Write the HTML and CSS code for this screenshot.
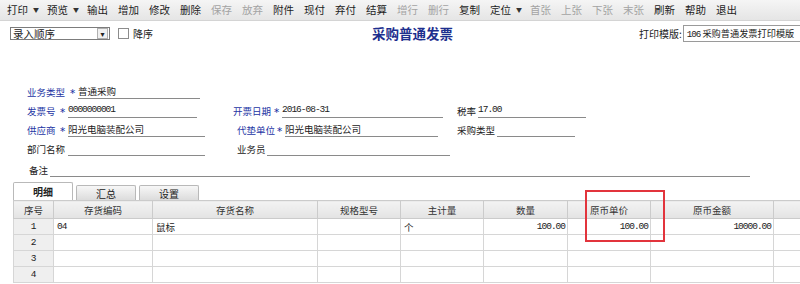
FILE: index.html
```html
<!DOCTYPE html>
<html lang="zh-CN">
<head>
    <meta charset="UTF-8">
    <title>采购普通发票</title>
    <link rel="stylesheet" href="styles.css">
</head>
<body>
<div class="page">
    <!-- toolbar -->
    <div class="toolbar">
        <span class="tb">打印</span><span class="tb arrow">▼</span>
        <span class="tb">预览</span><span class="tb arrow">▼</span>
        <span class="tb">输出</span>
        <span class="tb">增加</span>
        <span class="tb">修改</span>
        <span class="tb">删除</span>
        <span class="tb off">保存</span>
        <span class="tb off">放弃</span>
        <span class="tb">附件</span>
        <span class="tb">现付</span>
        <span class="tb">弃付</span>
        <span class="tb">结算</span>
        <span class="tb off">增行</span>
        <span class="tb off">删行</span>
        <span class="tb">复制</span>
        <span class="tb">定位</span><span class="tb arrow">▼</span>
        <span class="tb off">首张</span>
        <span class="tb off">上张</span>
        <span class="tb off">下张</span>
        <span class="tb off">末张</span>
        <span class="tb">刷新</span>
        <span class="tb">帮助</span>
        <span class="tb">退出</span>
    </div>

    <div class="bar2">
        <div class="sort">
            <div class="select">
                <span>录入顺序</span>
                <span class="drop">▾</span>
            </div>
            <span class="chk"></span>
            <span>降序</span>
        </div>
        <div class="title">采购普通发票</div>
        <div class="tpl">
            <span>打印模版:</span>
            <div class="tpl-input"><span class="num">106</span> 采购普通发票打印模版</div>
        </div>
    </div>

    <!-- header fields -->
    <div class="form">
        <div class="row">
            <div class="field col1">
                <span class="lab blue l-type">业务类型<i class="star">∗</i></span>
                <span class="val v-type">普通采购</span>
            </div>
        </div>
        <div class="row">
            <div class="field col1">
                <span class="lab blue l-no">发票号<i class="star">∗</i></span>
                <span class="val num v-no">0000000001</span>
            </div>
            <div class="field col2">
                <span class="lab blue l-date">开票日期<i class="star">∗</i></span>
                <span class="val num v-date">2016-08-31</span>
            </div>
            <div class="field">
                <span class="lab l-tax">税率</span>
                <span class="val num v-tax">17.00</span>
            </div>
        </div>
        <div class="row">
            <div class="field col1">
                <span class="lab blue l-no">供应商<i class="star">∗</i></span>
                <span class="val v-vendor">阳光电脑装配公司</span>
            </div>
            <div class="field col2">
                <span class="lab blue l-agent">代垫单位<i class="star">∗</i></span>
                <span class="val v-agent">阳光电脑装配公司</span>
            </div>
            <div class="field">
                <span class="lab l-ptype">采购类型</span>
                <span class="val v-ptype"></span>
            </div>
        </div>
        <div class="row">
            <div class="field col1">
                <span class="lab l-no">部门名称</span>
                <span class="val v-vendor"></span>
            </div>
            <div class="field col2">
                <span class="lab l-clerk">业务员</span>
                <span class="val v-clerk"></span>
            </div>
        </div>
        <div class="row row-note">
            <div class="field">
                <span class="lab l-note">备注</span>
                <span class="val v-note"></span>
            </div>
        </div>
    </div>

    <!-- tabs -->
    <div class="tabs">
        <div class="tab active">明细</div>
        <div class="tab">汇总</div>
        <div class="tab">设置</div>
    </div>

    <table class="grid">
        <colgroup>
            <col class="c-no"><col class="c-code"><col class="c-name"><col class="c-spec">
            <col class="c-unit"><col class="c-qty"><col class="c-price"><col class="c-amt"><col class="c-more">
        </colgroup>
        <tr class="head">
            <th>序号</th><th>存货编码</th><th>存货名称</th><th>规格型号</th>
            <th>主计量</th><th>数量</th><th>原币单价</th><th>原币金额</th><th></th>
        </tr>
        <tr>
            <td class="rn">1</td><td class="num">04</td><td>鼠标</td><td></td>
            <td>个</td><td class="num r">100.00</td><td class="num r">100.00</td><td class="num r">10000.00</td><td></td>
        </tr>
        <tr>
            <td class="rn">2</td><td></td><td></td><td></td><td></td><td></td><td></td><td></td><td></td>
        </tr>
        <tr>
            <td class="rn">3</td><td></td><td></td><td></td><td></td><td></td><td></td><td></td><td></td>
        </tr>
        <tr>
            <td class="rn">4</td><td></td><td></td><td></td><td></td><td></td><td></td><td></td><td></td>
        </tr>
    </table>

    <div class="mark"></div>
</div>
</body>
</html>
```

FILE: styles.css
```css
body {
    margin: 0;
    font-family: "Noto Sans CJK SC", "DejaVu Sans", sans-serif;
    font-size: 9.5px;
    color: #222;
    background: #fff;
    overflow: hidden;
}
.page {
    position: relative;
    width: 800px;
    height: 284px;
    overflow: hidden;
}

/* toolbar */
.toolbar {
    display: flex;
    height: 20px;
    padding-left: 2px;
    background: linear-gradient(#f5f5f5, #e5e5e5);
    border-bottom: 1px solid #d4d4d4;
    font-size: 10.5px;
    line-height: 20px;
    white-space: nowrap;
}
.tb {
    flex: none;
    width: 31px;
    text-align: center;
    color: #1c1c1c;
}
.tb.off {
    color: #a3a3a3;
}
.tb.arrow {
    width: 9px;
    font-size: 6px;
    text-align: left;
    color: #333;
}

/* second bar */
.bar2 {
    display: flex;
    align-items: center;
    height: 24px;
    white-space: nowrap;
}
.sort {
    display: flex;
    align-items: center;
    width: 362px;
    padding-left: 10px;
    flex: none;
    font-size: 10px;
}
.select {
    display: flex;
    justify-content: space-between;
    align-items: center;
    width: 100px;
    height: 13px;
    box-sizing: border-box;
    border: 1px solid #7c7c7c;
    padding-left: 2px;
    font-size: 10.5px;
    line-height: 11px;
}
.drop {
    width: 9px;
    height: 9px;
    margin-right: 1px;
    border: 1px solid #b0b0b0;
    background: #f0f0f0;
    font-size: 8px;
    line-height: 9px;
    text-align: center;
}
.chk {
    width: 9px;
    height: 9px;
    margin: 0 4px 0 8px;
    border: 1px solid #8c8c8c;
    background: #fff;
}
.title {
    flex: none;
    font-size: 13.5px;
    font-weight: bold;
    color: #1d2f8e;
    line-height: 16px;
}
.tpl {
    display: flex;
    align-items: center;
    flex: none;
    margin-left: 186px;
    font-size: 10px;
}
.tpl-input {
    width: 140px;
    height: 15px;
    margin-left: 1px;
    padding-left: 3px;
    border: 1px solid #9a9a9a;
    font-size: 9.2px;
    line-height: 15px;
}

/* header fields */
.form {
    margin-top: 35px;
}
.row {
    display: flex;
    align-items: flex-end;
    height: 19px;
    padding-left: 27px;
    white-space: nowrap;
}
.row-note {
    height: 21px;
    padding-left: 29px;
}
.field {
    display: flex;
    align-items: flex-end;
    flex: none;
}
.col1 { width: 206px; }
.col2 { width: 224px; }
.lab {
    display: flex;
    justify-content: space-between;
    flex: none;
    box-sizing: border-box;
    line-height: 14px;
}
.blue {
    color: #2435a4;
}
.star {
    font-style: normal;
    font-family: "DejaVu Sans", sans-serif;
    font-size: 8px;
    padding-right: 2px;
}
.val {
    flex: none;
    height: 14px;
    border-bottom: 1px solid #8a8a8a;
    line-height: 14px;
}
.num {
    font-family: "Liberation Mono", monospace;
    letter-spacing: -1px;
}
.l-type { width: 51px; }
.l-no { width: 41px; }
.l-date { width: 49px; }
.l-tax { width: 21px; }
.l-agent { width: 52px; padding-left: 4px; }
.l-ptype { width: 40px; }
.l-clerk { width: 34px; padding-left: 4px; }
.l-note { width: 21px; }
.v-type { width: 122px; }
.v-no { width: 129px; }
.v-date { width: 161px; }
.v-tax { width: 108px; }
.v-vendor { width: 137px; }
.v-agent { width: 153px; }
.v-ptype { width: 78px; }
.v-clerk { width: 183px; }
.v-note { width: 700px; }

/* tabs */
.tabs {
    display: flex;
    align-items: flex-end;
    gap: 3px;
    height: 23px;
    padding-left: 13px;
}
.tab {
    width: 58px;
    height: 14px;
    border: 1px solid #b9b9b9;
    border-bottom: none;
    border-radius: 2px 2px 0 0;
    background: linear-gradient(#f7f7f7, #dcdcdc);
    text-align: center;
    font-size: 10px;
    line-height: 15px;
}
.tab.active {
    height: 17px;
    background: #fff;
    font-weight: bold;
    line-height: 17px;
}

/* grid */
.grid {
    margin-left: 13px;
    width: 800px;
    border-collapse: collapse;
    table-layout: fixed;
}
.c-no { width: 40px; }
.c-code { width: 99px; }
.c-name { width: 165px; }
.c-spec { width: 83px; }
.c-unit { width: 83px; }
.c-qty { width: 84px; }
.c-price { width: 83px; }
.c-amt { width: 123px; }
.c-more { width: 40px; }
.grid th,
.grid td {
    padding: 0 3px;
    border: 1px solid #d6d6d6;
    white-space: nowrap;
    overflow: hidden;
    line-height: 14px;
}
.grid tr {
    height: 16px;
}
.grid .head {
    height: 18px;
}
.grid th {
    font-weight: normal;
    color: #333;
    background: linear-gradient(#f3f3f3, #e3e3e3);
    border-color: #cbcbcb;
}
.grid td.rn {
    background: #efefef;
    text-align: center;
    font-family: "Liberation Mono", monospace;
}
.grid td.r {
    text-align: right;
    padding-right: 2px;
}

/* red highlight box */
.mark {
    position: absolute;
    left: 585px;
    top: 190px;
    width: 80px;
    height: 52px;
    box-sizing: border-box;
    border: 2px solid #e2343c;
}
```
